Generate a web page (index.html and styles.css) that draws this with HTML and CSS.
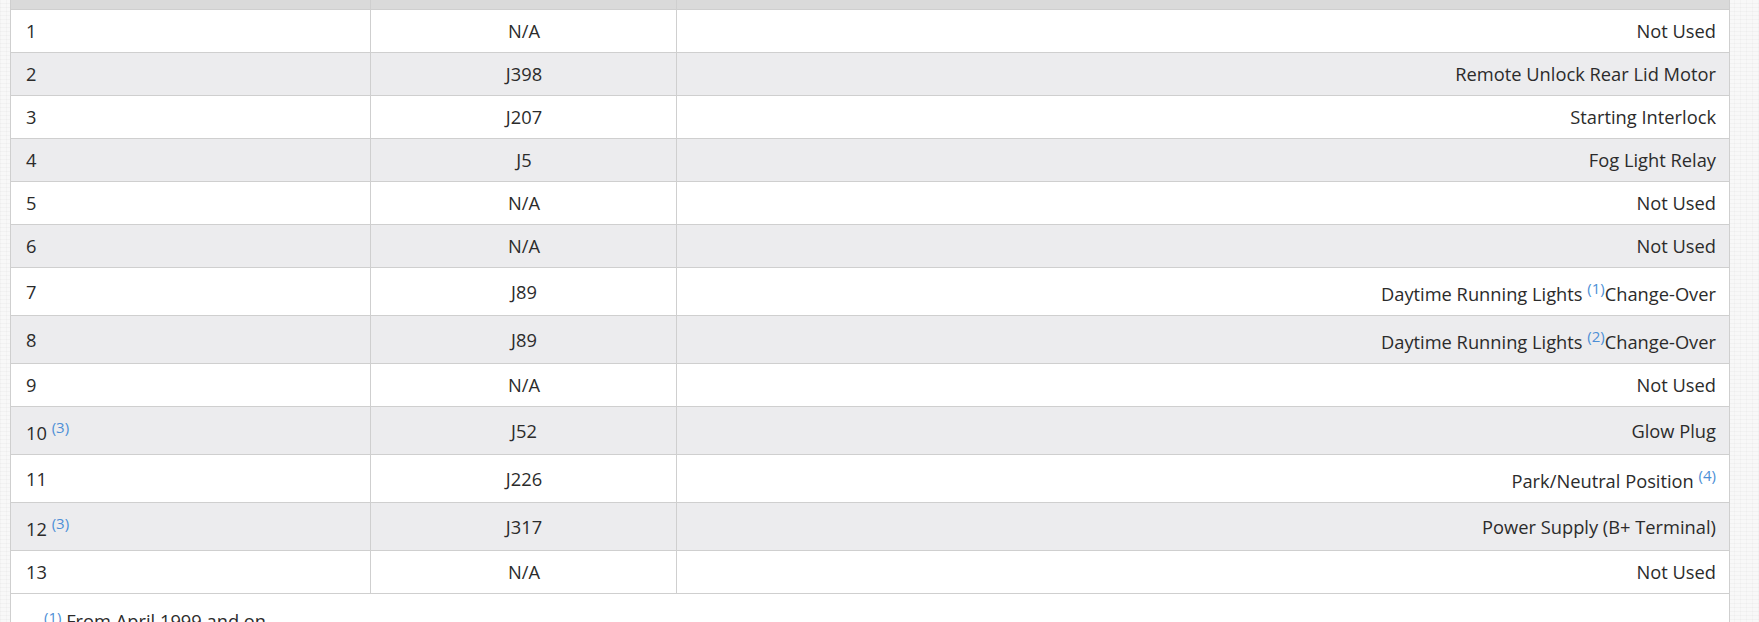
FILE: index.html
```html
<!DOCTYPE html>
<html lang="en">
<head>
<meta charset="utf-8">
<title>Relay Panel</title>
<link rel="stylesheet" href="styles.css">
</head>
<body>
<div class="panel">
  <table class="grid">
    <colgroup>
      <col class="c1">
      <col class="c2">
      <col class="c3">
    </colgroup>
    <thead>
      <tr class="head"><th></th><th></th><th></th></tr>
    </thead>
    <tbody>
      <tr><td>1</td><td class="mid">N/A</td><td class="end">Not Used</td></tr>
      <tr><td>2</td><td class="mid">J398</td><td class="end">Remote Unlock Rear Lid Motor</td></tr>
      <tr><td>3</td><td class="mid">J207</td><td class="end">Starting Interlock</td></tr>
      <tr><td>4</td><td class="mid">J5</td><td class="end">Fog Light Relay</td></tr>
      <tr><td>5</td><td class="mid">N/A</td><td class="end">Not Used</td></tr>
      <tr><td>6</td><td class="mid">N/A</td><td class="end">Not Used</td></tr>
      <tr><td>7</td><td class="mid">J89</td><td class="end">Daytime Running Lights <sup class="ref">(1)</sup>Change-Over</td></tr>
      <tr><td>8</td><td class="mid">J89</td><td class="end">Daytime Running Lights <sup class="ref">(2)</sup>Change-Over</td></tr>
      <tr><td>9</td><td class="mid">N/A</td><td class="end">Not Used</td></tr>
      <tr><td>10 <sup class="ref">(3)</sup></td><td class="mid">J52</td><td class="end">Glow Plug</td></tr>
      <tr><td>11</td><td class="mid">J226</td><td class="end">Park/Neutral Position <sup class="ref">(4)</sup></td></tr>
      <tr><td>12 <sup class="ref">(3)</sup></td><td class="mid">J317</td><td class="end">Power Supply (B+ Terminal)</td></tr>
      <tr><td>13</td><td class="mid">N/A</td><td class="end">Not Used</td></tr>
    </tbody>
  </table>
  <div class="notes">
    <p class="note"><sup class="ref">(1)</sup> From April 1999 and on</p>
  </div>
</div>
</body>
</html>
```

FILE: styles.css
```css
html, body {
  margin: 0;
  padding: 0;
}
body {
  background-color: #f8f8f8;
  background-image:
    repeating-linear-gradient(0deg, rgba(0,0,0,0.025) 0 1px, transparent 1px 4px),
    repeating-linear-gradient(90deg, rgba(0,0,0,0.02) 0 1px, transparent 1px 6px);
  font-family: "Open Sans", "Liberation Sans", sans-serif;
  font-size: 18.3px;
  color: #2b2b2b;
  overflow: hidden;
}
.panel {
  box-sizing: border-box;
  margin-left: 10px;
  width: 1720px;
  background: #fff;
  border-left: 1px solid #cfcfcf;
  border-right: 1px solid #cfcfcf;
  min-height: 700px;
}
.grid {
  width: 100%;
  border-collapse: collapse;
  table-layout: fixed;
}
.c1 { width: 359px; }
.c2 { width: 306px; }
.grid th,
.grid td {
  border: 1px solid #cfcfcf;
}
.grid tr > :first-child { border-left: 0; }
.grid tr > :last-child { border-right: 0; }
.head th {
  height: 9px;
  padding: 0;
  background: #dadada;
  border-top: 0;
}
.grid td {
  padding: 8px 13px 8px 15px;
  line-height: 26px;
  vertical-align: middle;
  text-align: left;
}
.grid tbody tr:nth-child(even) td {
  background: #ececee;
}
.grid td.mid { text-align: center; }
.grid td.end { text-align: right; }
.ref {
  color: #4d8fd6;
  font-size: 15px;
  line-height: 24px;
  vertical-align: 7px;
}
.notes {
  padding: 14px 0 0 33px;
}
.note {
  margin: 0;
  line-height: 26px;
}
.note .ref {
  line-height: 0;
  vertical-align: 5px;
}
```
